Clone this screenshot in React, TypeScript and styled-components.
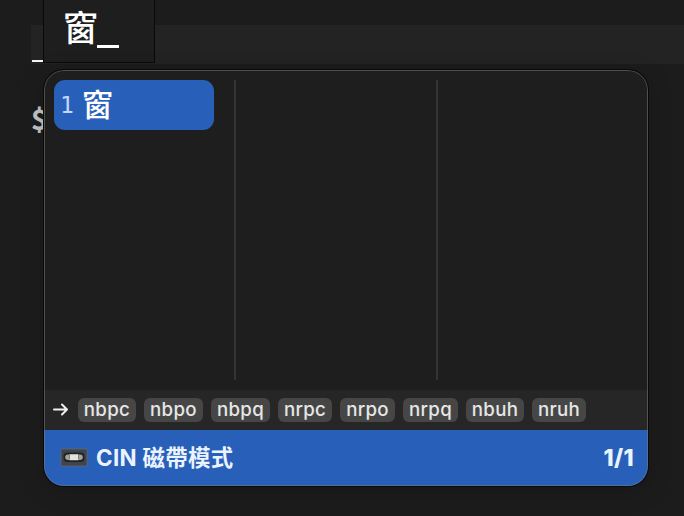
import React from "react";
import styled, { createGlobalStyle } from "styled-components";

const GlobalStyle = createGlobalStyle`
  * { box-sizing: border-box; }
  html, body { margin: 0; background: #1c1c1c; overflow: hidden; }
  body { font-family: Inter, "Noto Sans CJK TC", sans-serif; }
`;

const Screen = styled.main`
  position: relative;
  width: 684px;
  height: 516px;
  overflow: hidden;
  background: #1c1c1c;
`;

const Terminal = styled.section`
  padding: 25px 0 0 31px;
`;

const InputLine = styled.div`
  display: flex;
  align-items: flex-end;
  height: 39px;
  padding: 0 0 2px 1px;
  background: #232323;
`;

const Cursor = styled.span`
  width: 16px;
  height: 2px;
  background: #f4f4f4;
`;

const Prompt = styled.div`
  margin: 34px 0 0 0;
  color: #c6c6c6;
  font: 700 28px/40px "Noto Sans CJK TC", sans-serif;
`;

const Composition = styled.div`
  position: absolute;
  left: 43px;
  top: -2px;
  display: flex;
  width: 112px;
  height: 65px;
  padding: 5px 0 0 19px;
  background: #1e1e1e;
  border: 1px solid #090909;
  color: #fff;
  font: 500 35px/44px "Noto Sans CJK TC", sans-serif;
`;

const Caret = styled.span`
  width: 22px;
  height: 3px;
  margin: 41px 0 0 -1px;
  background: #fff;
`;

const CandidateWindow = styled.section`
  position: absolute;
  left: 44px;
  top: 70px;
  display: flex;
  flex-direction: column;
  width: 604px;
  height: 416px;
  overflow: hidden;
  border-radius: 20px;
  background: #1e1e1e;
  box-shadow: 0 0 0 1px #090909, 0 5px 26px rgba(0, 0, 0, 0.2);

  &::after {
    content: "";
    position: absolute;
    inset: 0;
    border: 1px solid rgba(128, 128, 120, 0.5);
    border-radius: inherit;
  }
`;

const CandidateGrid = styled.div`
  display: grid;
  grid-template-columns: 182px 202px 1fr;
  height: 320px;
  padding: 10px;
`;

const Column = styled.div`
  border-right: 2px solid #343434;
  &:last-child { border-right: 0; }
`;

const Candidate = styled.div`
  display: flex;
  align-items: center;
  width: 160px;
  height: 50px;
  padding-left: 6px;
  border-radius: 11px;
  background: #2860b9;
  color: #fff;
`;

const Index = styled.span`
  width: 22px;
  color: #c0d7ff;
  font: 23px/50px "DejaVu Sans Mono", monospace;
`;

const Character = styled.span`
  position: relative;
  top: -2px;
  font: 500 31px/50px "Noto Sans CJK TC", sans-serif;
`;

const CodeBar = styled.div`
  display: flex;
  align-items: center;
  height: 40px;
  padding: 0 0 1px 8px;
  background: #262626;
`;

const Arrow = styled.svg`
  width: 17px;
  height: 20px;
  margin-right: 9px;
  fill: none;
  stroke: #f0f0f0;
  stroke-width: 2;
  stroke-linecap: round;
  stroke-linejoin: round;
`;

const CodeList = styled.div`
  display: flex;
  gap: 8px;
`;

const Code = styled.span<{ $width: number }>`
  width: ${({ $width }) => $width}px;
  height: 24px;
  border-radius: 6px;
  background: #464646;
  color: #e6e6e6;
  text-align: center;
  font: 500 18.7px/24px Inter, sans-serif;
  letter-spacing: 0.3px;
`;

const Footer = styled.footer`
  display: flex;
  align-items: center;
  height: 56px;
  padding: 0 14px 0 16px;
  background: #2860b9;
  color: #eaf3ff;
  font: 700 22.4px/32px Inter, "Noto Sans CJK TC", sans-serif;
`;

const Cassette = styled.svg`
  width: 28px;
  height: 20px;
  margin-right: 8px;
`;

const Mode = styled.span`
  flex: 1;
  letter-spacing: 0.35px;
`;

const Page = styled.span`
  font-size: 23px;
  font-weight: 800;
  letter-spacing: 0.3px;
`;

const codes = [
  { text: "nbpc", width: 58 },
  { text: "nbpo", width: 59 },
  { text: "nbpq", width: 59 },
  { text: "nrpc", width: 54 },
  { text: "nrpo", width: 55 },
  { text: "nrpq", width: 55 },
  { text: "nbuh", width: 58 },
  { text: "nruh", width: 54 },
];

export default function App() {
  return (
    <>
      <GlobalStyle />
      <Screen>
        <Terminal>
          <InputLine><Cursor /></InputLine>
          <Prompt>$</Prompt>
        </Terminal>
        <Composition>窗<Caret /></Composition>
        <CandidateWindow>
          <CandidateGrid>
            <Column>
              <Candidate><Index>1</Index><Character>窗</Character></Candidate>
            </Column>
            <Column />
            <Column />
          </CandidateGrid>
          <CodeBar>
            <Arrow viewBox="0 0 17 20"><path d="M2 9.5h13M10 4.5l5 5-5 5" /></Arrow>
            <CodeList>
              {codes.map(({ text, width }) => <Code key={text} $width={width}>{text}</Code>)}
            </CodeList>
          </CodeBar>
          <Footer>
            <Cassette viewBox="0 0 28 20">
              <rect x="1" y="1" width="26" height="17" rx="1" fill="#414448" stroke="#696b69" strokeWidth=".7" />
              <rect x="3.5" y="4.5" width="21" height="9.5" rx="4" fill="#202326" />
              <ellipse cx="8" cy="9.2" rx="2.8" ry="2.7" fill="#a2a39d" />
              <ellipse cx="20" cy="9.2" rx="2.8" ry="2.7" fill="#a2a39d" />
              <rect x="9" y="6.2" width="10" height="6" rx=".7" fill="#e5e4da" />
              <path d="M9.5 6.5v5M18.5 6.5v5" stroke="#6c6760" strokeWidth=".8" />
            </Cassette>
            <Mode>CIN 磁帶模式</Mode>
            <Page>1/1</Page>
          </Footer>
        </CandidateWindow>
      </Screen>
    </>
  );
}
